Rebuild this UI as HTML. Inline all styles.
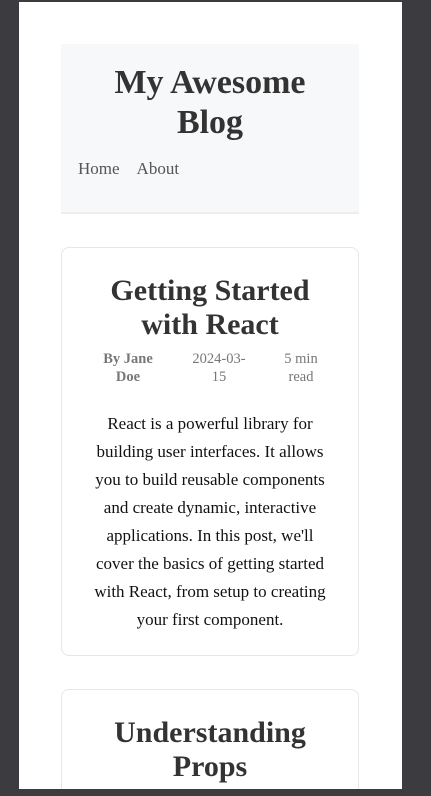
<!DOCTYPE html>
<html><head><meta charset="utf-8"><style>
html,body{margin:0;padding:0;background:#3c3c40;width:431px;height:796px;overflow:hidden;font-family:"Liberation Serif",serif;}
.page{position:absolute;left:19px;top:2px;width:383px;height:787px;background:#fff;overflow:hidden;}
.header{position:absolute;left:42px;top:42px;width:298px;height:168px;background:#f7f8fa;border-bottom:2px solid #eceef0;}
.header h1{margin:0;position:absolute;top:19px;left:0;width:298px;text-align:center;font-size:34px;line-height:40px;color:#333;font-weight:bold;}
.nav{position:absolute;left:17px;top:115px;font-size:17px;color:#555;}
.nav span{margin-right:17px;}
.card{position:absolute;left:42px;width:296px;border:1px solid #e6e6e6;border-radius:8px;background:#fff;}
.card h2{margin:0;position:absolute;left:0;width:296px;text-align:center;font-size:30px;line-height:34px;color:#333;font-weight:bold;}
.meta div{position:absolute;width:64px;text-align:center;font-size:14.5px;line-height:18px;color:#777;}
.body{position:absolute;left:28px;width:240px;text-align:center;font-size:17px;line-height:28px;color:#111;}
</style></head><body>
<div class="page">
<div class="header"><h1>My Awesome<br>Blog</h1><div class="nav"><span>Home</span><span>About</span></div></div>
<div class="card" style="top:245px;height:407px;">
<h2 style="top:26px;">Getting Started<br>with React</h2>
<div class="meta"><div style="left:34px;top:102px;font-weight:bold;">By Jane<br>Doe</div><div style="left:125px;top:102px;">2024-03-<br>15</div><div style="left:207px;top:102px;">5 min<br>read</div></div>
<div class="body" style="top:162px;">React is a powerful library for building user interfaces. It allows you to build reusable components and create dynamic, interactive applications. In this post, we'll cover the basics of getting started with React, from setup to creating your first component.</div>
</div>
<div class="card" style="top:687px;height:120px;">
<h2 style="top:26px;">Understanding<br>Props</h2>
</div>
</div>
</body></html>
